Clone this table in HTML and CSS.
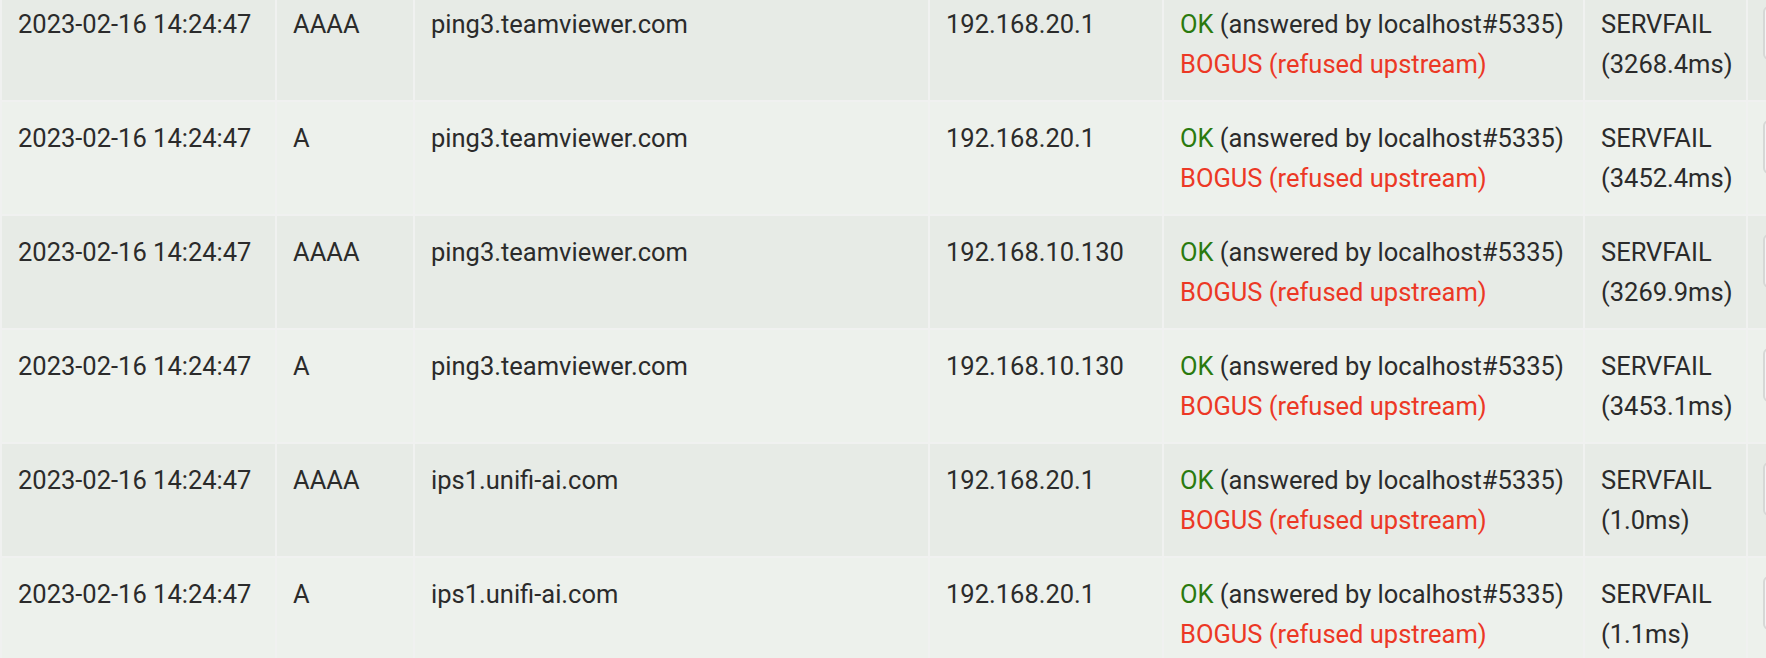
FILE: index.html
```html
<!DOCTYPE html>
<html lang="en">
<head>
<meta charset="utf-8">
<title>Query Log</title>
<link rel="stylesheet" href="styles.css">
</head>
<body>
<table class="log">
  <colgroup>
    <col class="c-time">
    <col class="c-type">
    <col class="c-domain">
    <col class="c-client">
    <col class="c-status">
    <col class="c-reply">
    <col class="c-action">
  </colgroup>
  <tbody>
    <tr class="row-dark">
      <td>2023-02-16 14:24:47</td>
      <td>AAAA</td>
      <td>ping3.teamviewer.com</td>
      <td>192.168.20.1</td>
      <td class="status"><span class="ok">OK</span> (answered by localhost#5335)<br><span class="bogus">BOGUS (refused upstream)</span></td>
      <td class="reply">SERVFAIL (3268.4ms)</td>
      <td class="action"><button class="btn" aria-label="Blacklist"></button></td>
    </tr>
    <tr class="row-light">
      <td>2023-02-16 14:24:47</td>
      <td>A</td>
      <td>ping3.teamviewer.com</td>
      <td>192.168.20.1</td>
      <td class="status"><span class="ok">OK</span> (answered by localhost#5335)<br><span class="bogus">BOGUS (refused upstream)</span></td>
      <td class="reply">SERVFAIL (3452.4ms)</td>
      <td class="action"><button class="btn" aria-label="Blacklist"></button></td>
    </tr>
    <tr class="row-dark">
      <td>2023-02-16 14:24:47</td>
      <td>AAAA</td>
      <td>ping3.teamviewer.com</td>
      <td>192.168.10.130</td>
      <td class="status"><span class="ok">OK</span> (answered by localhost#5335)<br><span class="bogus">BOGUS (refused upstream)</span></td>
      <td class="reply">SERVFAIL (3269.9ms)</td>
      <td class="action"><button class="btn" aria-label="Blacklist"></button></td>
    </tr>
    <tr class="row-light">
      <td>2023-02-16 14:24:47</td>
      <td>A</td>
      <td>ping3.teamviewer.com</td>
      <td>192.168.10.130</td>
      <td class="status"><span class="ok">OK</span> (answered by localhost#5335)<br><span class="bogus">BOGUS (refused upstream)</span></td>
      <td class="reply">SERVFAIL (3453.1ms)</td>
      <td class="action"><button class="btn" aria-label="Blacklist"></button></td>
    </tr>
    <tr class="row-dark">
      <td>2023-02-16 14:24:47</td>
      <td>AAAA</td>
      <td>ips1.unifi-ai.com</td>
      <td>192.168.20.1</td>
      <td class="status"><span class="ok">OK</span> (answered by localhost#5335)<br><span class="bogus">BOGUS (refused upstream)</span></td>
      <td class="reply">SERVFAIL (1.0ms)</td>
      <td class="action"><button class="btn" aria-label="Blacklist"></button></td>
    </tr>
    <tr class="row-light">
      <td>2023-02-16 14:24:47</td>
      <td>A</td>
      <td>ips1.unifi-ai.com</td>
      <td>192.168.20.1</td>
      <td class="status"><span class="ok">OK</span> (answered by localhost#5335)<br><span class="bogus">BOGUS (refused upstream)</span></td>
      <td class="reply">SERVFAIL (1.1ms)</td>
      <td class="action"><button class="btn" aria-label="Blacklist"></button></td>
    </tr>
  </tbody>
</table>
</body>
</html>
```

FILE: styles.css
```css
html, body {
  margin: 0;
  padding: 0;
  background: #f0f1f0;
  overflow: hidden;
}

body {
  font-family: Roboto, "Liberation Sans", sans-serif;
  font-size: 25.5px;
  line-height: 40px;
  color: #2b2b2b;
}

.log {
  table-layout: fixed;
  width: 1950px;
  border-collapse: separate;
  border-spacing: 2px;
  background: #f0f1f0;
  margin-top: -14px;
}

.c-time { width: 273px; }
.c-type { width: 136px; }
.c-domain { width: 513px; }
.c-client { width: 232px; }
.c-status { width: 419px; }
.c-reply { width: 161px; }
.c-action { width: 200px; }

.log td {
  box-sizing: border-box;
  height: 112px;
  padding: 16px;
  vertical-align: top;
  white-space: nowrap;
}

.row-dark td { background: #e7ebe6; }
.row-light td { background: #edf1ec; }

.log td.reply {
  white-space: normal;
}

.ok { color: #2a7a0e; }
.bogus { color: #ec3825; }

.log td.action {
  padding-left: 15px;
}

.btn {
  display: block;
  box-sizing: border-box;
  width: 130px;
  height: 54px;
  margin-top: 2px;
  padding: 0;
  border: 2px solid #d6d8d6;
  border-radius: 6px;
  background: #f4f4f4;
}
```
